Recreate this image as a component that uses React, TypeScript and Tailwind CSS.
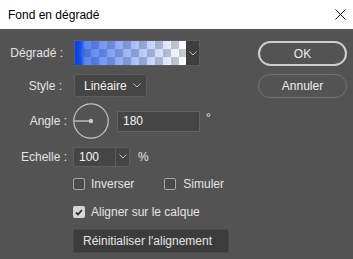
import React from "react";

const Chevron = () => (
  <svg width="8" height="5" viewBox="0 0 8 5" fill="none">
    <polyline points="0.5,0.5 4,4 7.5,0.5" stroke="#bdbdbd" strokeWidth="1" />
  </svg>
);

const Box = ({ checked }: { checked?: boolean }) =>
  checked ? (
    <div className="w-[12px] h-[12px] rounded-[2px] bg-[#d6d6d6] flex items-center justify-center">
      <svg width="8" height="7" viewBox="0 0 8 7" fill="none">
        <polyline points="1,3.5 3,5.5 7,1" stroke="#2e2e2e" strokeWidth="1.8" />
      </svg>
    </div>
  ) : (
    <div className="w-[12px] h-[12px] rounded-[2px] border border-[#a8a8a8] bg-[#4a4a4a]" />
  );

export default function App() {
  return (
    <div
      className="w-[353px] h-[259px] bg-[#535353] flex flex-col text-[12px] text-[#e4e4e4] overflow-hidden"
      style={{ fontFamily: '"Liberation Sans", Arial, sans-serif' }}
    >
      <div className="h-[29px] bg-white flex items-center justify-between pl-[8px] pr-[7px] text-black">
        <span className="text-[12px]">Fond en dégradé</span>
        <svg width="11" height="11" viewBox="0 0 11 11" fill="none">
          <line x1="0.5" y1="0.5" x2="10.5" y2="10.5" stroke="#111" strokeWidth="1" />
          <line x1="10.5" y1="0.5" x2="0.5" y2="10.5" stroke="#111" strokeWidth="1" />
        </svg>
      </div>
      <div className="flex flex-1">
        <div className="flex-1 flex flex-col pt-[11px]">
          {/* Dégradé */}
          <div className="flex items-center h-[26px]">
            <div className="w-[74px] text-right pr-[11px]">Dégradé :</div>
            <div className="w-[126px] h-[26px] border border-[#5c5c5c] flex">
              <svg width="111" height="24" className="block">
                <defs>
                  <pattern id="chk" width="16" height="16" patternUnits="userSpaceOnUse">
                    <rect width="16" height="16" fill="#ffffff" />
                    <rect width="8" height="8" fill="#cccccc" />
                    <rect x="8" y="8" width="8" height="8" fill="#cccccc" />
                  </pattern>
                  <linearGradient id="grd" x1="0" y1="0" x2="1" y2="0">
                    <stop offset="0" stopColor="#0040e8" stopOpacity="1" />
                    <stop offset="0.05" stopColor="#0040e8" stopOpacity="0.9" />
                    <stop offset="0.09" stopColor="#0040e8" stopOpacity="0.65" />
                    <stop offset="1" stopColor="#0040e8" stopOpacity="0" />
                  </linearGradient>
                </defs>
                <rect width="111" height="24" fill="url(#chk)" />
                <rect width="111" height="24" fill="url(#grd)" />
              </svg>
              <div className="flex-1 bg-[#3e3e3e] flex items-center justify-center">
                <Chevron />
              </div>
            </div>
          </div>
          {/* Style */}
          <div className="flex items-center h-[23px] mt-[8px]">
            <div className="w-[74px] text-right pr-[12px]">Style :</div>
            <div className="w-[73px] h-[23px] rounded-[3px] border border-[#5e5e5e] bg-[#454545] flex items-center pl-[9px] pr-[5px] justify-between">
              <span className="text-[#f0f0f0]">Linéaire</span>
              <Chevron />
            </div>
          </div>
          {/* Angle */}
          <div className="flex items-center h-[36px] mt-[6px]">
            <div className="w-[74px] text-right pr-[7px]">Angle :</div>
            <svg width="36" height="36" viewBox="0 0 36 36" className="block -ml-[1px]">
              <circle cx="18" cy="18" r="17.2" stroke="#c4c4c4" strokeWidth="1.2" fill="none" />
              <line x1="1" y1="18" x2="18" y2="18" stroke="#b8b8b8" strokeWidth="1.5" />
              <circle cx="18" cy="18" r="2.2" fill="#c8c8c8" />
            </svg>
            <div className="ml-[8px] w-[83px] h-[21px] border border-[#636363] bg-[#454545] flex items-center pl-[5px] text-[#f4f4f4]">
              180
            </div>
            <span className="ml-[6px] self-start mt-[6px] text-[12px]">°</span>
          </div>
          {/* Echelle */}
          <div className="flex items-center h-[19px] mt-[8px]">
            <div className="w-[74px] text-right pr-[7px]">Echelle :</div>
            <div className="-ml-[1px] w-[57px] h-[20px] rounded-[2px] border border-[#5e5e5e] bg-[#454545] flex">
              <div className="w-[42px] flex items-center pl-[5px] text-[#f4f4f4] border-r border-[#5e5e5e]">100</div>
              <div className="flex-1 flex items-center justify-center">
                <Chevron />
              </div>
            </div>
            <span className="ml-[8px]">%</span>
          </div>
          {/* Checkboxes */}
          <div className="flex items-center h-[12px] mt-[12px] pl-[73px]">
            <Box />
            <span className="ml-[6px]">Inverser</span>
            <div className="ml-[30px] flex items-center">
              <Box />
              <span className="ml-[7px]">Simuler</span>
            </div>
          </div>
          <div className="flex items-center h-[12px] mt-[16px] pl-[73px]">
            <Box checked />
            <span className="ml-[6px]">Aligner sur le calque</span>
          </div>
          <div className="mt-[11px] pl-[73px]">
            <div className="w-[156px] h-[24px] rounded-[2px] border border-[#4a4a4a] bg-[#3c3c3c] flex items-center pl-[9px]">
              Réinitialiser l'alignement
            </div>
          </div>
        </div>
        <div className="w-[89px] mr-[6px] pt-[12px] flex flex-col gap-[8px]">
          <div className="h-[25px] rounded-full border-2 border-[#cfcfcf] flex items-center justify-center text-[#ececec]">
            OK
          </div>
          <div className="h-[24px] rounded-full border border-[#737373] flex items-center justify-center text-[#ececec]">
            Annuler
          </div>
        </div>
      </div>
    </div>
  );
}
